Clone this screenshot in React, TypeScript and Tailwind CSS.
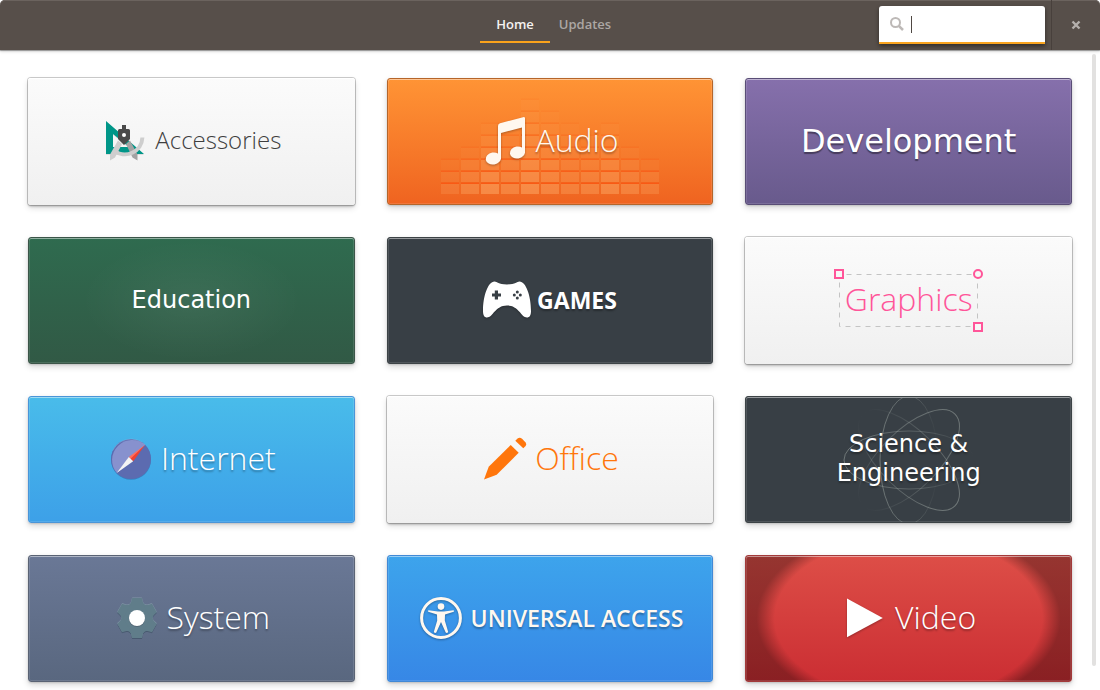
import type { ReactNode } from "react";

const LIGHT =
  "bg-linear-to-b from-[#fbfbfb] to-[#f0f0f0] shadow-[0_0_0_1px_rgba(0,0,0,0.2),0_2px_2px_rgba(0,0,0,0.16),0_3px_6px_rgba(0,0,0,0.14),inset_0_1px_0_#ffffff]";
const SOLID =
  "border shadow-[0_1px_2px_rgba(0,0,0,0.14),0_3px_6px_rgba(0,0,0,0.16),inset_0_1px_0_rgba(255,255,255,0.4),inset_0_0_0_1px_rgba(255,255,255,0.12)]";
const THIN = "pb-0.5 font-['Open_Sans','Noto_Sans',sans-serif] font-light";
const HEAVY = "font-['Open_Sans','Noto_Sans',sans-serif] text-[23px]";
const DEJAVU = "font-['DejaVu_Sans',sans-serif]";
const TEXT_SHADOW = "[text-shadow:0_2px_2px_rgba(0,0,0,0.3)]";
const ICON_SHADOW = "drop-shadow-[0_1px_1px_rgba(0,0,0,0.3)]";

function Tile({ className, backdrop, children }: { className: string; backdrop?: ReactNode; children: ReactNode }) {
  return (
    <button
      type="button"
      className={`relative flex h-[127px] items-center justify-center overflow-hidden rounded-[3px] bg-origin-border pb-px ${className}`}
    >
      {backdrop}
      <span className="relative flex items-center justify-center gap-1.5">{children}</span>
    </button>
  );
}

function Icon({ className = "", children }: { className?: string; children: ReactNode }) {
  return (
    <svg viewBox="0 0 48 48" className={`size-12 shrink-0 overflow-visible ${className}`} aria-hidden="true">
      {children}
    </svg>
  );
}

function AccessoriesIcon() {
  return (
    <Icon>
      <path d="M5 4 43 37H5Z M12 17V30H28Z" transform="translate(0 .8)" fill="#000" opacity=".12" fillRule="evenodd" />
      <path d="M5 4 43 37H5Z M12 17V30H28Z" fill="#009688" fillRule="evenodd" />
      <path d="M25 27 29 23.5 36.5 37.5V43.5L31.5 40.5Z" fill="#a3a3a3" />
      <path d="M41.4 20.5A17.5 17.5 0 0 1 13 33.5" fill="none" stroke="#cecece" strokeWidth="4" />
      <path d="M17 23.5 21 27 14 40.5 9 43.5V37.5Z" fill="#cecece" />
      <path d="M21 8H25V12H27.5Q29 12 29 13.5V22L23 28 17 22V13.5Q17 12 18.5 12H21Z" fill="#4a4a4a" />
      <circle cx="23" cy="18" r="2" fill="#fff" />
    </Icon>
  );
}

function AudioIcon() {
  return (
    <Icon className={ICON_SHADOW}>
      <path d="M17 9Q17 7 19 6.3L42 .2Q44 -.4 44 1.5V36H41V10.5L20 16V42H17Z" fill="#fff8ef" />
      <ellipse cx="12.3" cy="41.5" rx="7.7" ry="6" transform="rotate(-10 12.3 41.5)" fill="#fff8ef" />
      <ellipse cx="36.4" cy="35.5" rx="7.6" ry="6" transform="rotate(-10 36.4 35.5)" fill="#fff8ef" />
    </Icon>
  );
}

const LEVELS = [3, 4, 6, 6, 8, 7, 6, 5, 6, 4, 3];
const STRENGTH = [0.16, 0.26, 0.36, 0.28, 0.36, 0.3, 0.24, 0.26, 0.32, 0.26, 0.2];

function Equalizer() {
  return (
    <span className="absolute inset-x-0 bottom-2.5 flex justify-center">
      <svg viewBox="0 0 218 96" className="h-24 w-[218px]" aria-hidden="true">
        {LEVELS.map((level, col) =>
          Array.from({ length: level }, (_, row) => {
            const fade = 1 - row / level;
            return (
              <g key={`${col}-${row}`}>
                <rect x={col * 20} y={86 - row * 12} width="18" height="10" fill="#ffb877" opacity={STRENGTH[col] * fade * 1.2} />
                <rect x={col * 20} y={84.5 - row * 12} width="18" height="1.5" fill="#ff4a0a" opacity={0.55 * fade} />
              </g>
            );
          }),
        )}
      </svg>
    </span>
  );
}

function GamesIcon() {
  return (
    <Icon className={ICON_SHADOW}>
      <path
        d="M11.5 5.5C14.5 5.5 15 8.5 24 8.5S33.5 5.5 36.5 5.5C43 5.5 48 20 48 35 48 39.5 46.5 41.5 44 41.5 38 41.5 36 29.5 24 29.5S10 41.5 4 41.5C1.5 41.5 0 39.5 0 35 0 20 5 5.5 11.5 5.5Z"
        fill="#fff"
      />
      <path d="M11.8 14.5H15V17.4H18V20.6H15V23.5H11.8V20.6H9V17.4H11.8Z" fill="#383f45" />
      <g fill="#383f45">
        <circle cx="34.3" cy="16" r="1.5" />
        <circle cx="34.3" cy="22" r="1.5" />
        <circle cx="31.3" cy="19" r="1.5" />
        <circle cx="37.3" cy="19" r="1.5" />
      </g>
    </Icon>
  );
}

function SelectionFrame() {
  return (
    <svg viewBox="0 0 139 53" className="absolute inset-0 h-full w-full overflow-visible" aria-hidden="true">
      <rect x=".5" y=".5" width="138" height="52" fill="none" stroke="#c4c4c4" strokeDasharray="5 5" strokeDashoffset="3" />
      <g fill="#f7f7f7" stroke="#ff5599" strokeWidth="2">
        <rect x="-4" y="-4" width="8" height="8" />
        <circle cx="139" cy="0" r="4" />
        <rect x="135" y="49" width="8" height="8" />
      </g>
    </svg>
  );
}

function InternetIcon() {
  return (
    <Icon>
      <circle cx="24" cy="24.8" r="20" fill="#1d3f7a" opacity=".35" />
      <circle cx="24" cy="24" r="20" fill="#5c6bb0" />
      <path d="M9.9 38.1A20 20 0 0 1 38.1 9.9Z" fill="#8791ce" />
      <path d="M6 15.5A20 20 0 0 1 38.1 9.9" fill="none" stroke="#fff" strokeOpacity=".2" strokeWidth=".8" />
      <path d="M38 10 21.8 22 24 24.2Z" fill="#ff6f5e" />
      <path d="M38 10 26.2 26.2 23.5 23.8Z" fill="#f0412f" />
      <path d="M9.7 38 21.8 22 26.2 26.2Z" fill="#f3f3f3" />
    </Icon>
  );
}

function OfficeIcon() {
  return (
    <Icon>
      <path d="M3 44.5 7.7 31.7 29.7 10 37.7 17.7 15.7 39.7Z" fill="#ff760c" />
      <path d="M34.3 5.7 36.3 3.7Q38.8 1.8 41.3 4L44.6 7.6Q46 9.3 44.6 11L42.3 13.3Z" fill="#ff760c" />
    </Icon>
  );
}

function Atom() {
  return (
    <span className="absolute inset-0 flex items-center justify-center">
      <svg viewBox="-70 -70 140 140" className="size-[140px] shrink-0" aria-hidden="true">
        <defs>
          <linearGradient id="orbit" x1="0" y1="0" x2="1" y2="0">
            <stop offset="0" stopColor="#9aa39f" stopOpacity=".55" />
            <stop offset=".6" stopColor="#9aa39f" stopOpacity=".3" />
            <stop offset="1" stopColor="#9aa39f" stopOpacity="0" />
          </linearGradient>
        </defs>
        <g fill="none" stroke="url(#orbit)" strokeWidth="1">
          <ellipse rx="65" ry="29" />
          <ellipse rx="29" ry="64" />
          <ellipse rx="65" ry="29" transform="rotate(135)" />
          <ellipse rx="65" ry="29" transform="rotate(225)" />
        </g>
      </svg>
    </span>
  );
}

function Gear({ fill }: { fill: string }) {
  return (
    <g fill={fill}>
      <circle cx="24" cy="24" r="15" />
      {[0, 60, 120, 180, 240, 300].map((angle) => (
        <path key={angle} d="M19 4.5Q19 4 19.5 4H28.5Q29 4 29 4.5L30 8.5Q31 11 34 12H14Q17 11 18 8.5Z" transform={`rotate(${angle} 24 24)`} />
      ))}
    </g>
  );
}

function SystemIcon() {
  return (
    <Icon>
      <g transform="translate(0 1)" opacity=".5">
        <Gear fill="#33475a" />
      </g>
      <g transform="translate(0 -.6)" opacity=".7">
        <Gear fill="#90a5b4" />
      </g>
      <Gear fill="#607d8a" />
      <circle cx="24" cy="24.8" r="8" fill="#333344" opacity=".4" />
      <circle cx="24" cy="24" r="8" fill="#fff" />
    </Icon>
  );
}

function AccessIcon() {
  return (
    <Icon className={ICON_SHADOW}>
      <circle cx="24" cy="24" r="19.4" fill="none" stroke="#fff8ef" strokeWidth="3" />
      <circle cx="24" cy="12.6" r="3.3" fill="#fff8ef" />
      <path
        d="M11.5 16.2 21 17.5H27L36.5 16.2Q37.5 16.8 36.7 17.8L28 20.5 27.8 26.5 31.2 38Q30 39.5 28.7 38.5L24 28 19.3 38.5Q18 39.5 16.8 38L20.2 26.5 20 20.5 11.3 17.8Q10.5 16.8 11.5 16.2Z"
        fill="#fff8ef"
      />
    </Icon>
  );
}

function VideoIcon() {
  return (
    <Icon className={ICON_SHADOW}>
      <path d="M6 4.5 41.8 24 6 43.3Z" fill="#fff" />
    </Icon>
  );
}

function Header() {
  return (
    <header className="relative grid h-[50px] grid-cols-[1fr_auto_1fr] rounded-t-[5px] bg-[#574f4a] font-['Open_Sans','Noto_Sans',sans-serif] shadow-[inset_0_1px_0_#6b635e,0_1px_1px_rgba(0,0,0,0.35),0_2px_3px_rgba(0,0,0,0.12)]">
      <nav className="col-start-2 flex h-[43px] text-[13px] font-semibold">
        <a href="#home" aria-current="page" className="flex w-[70px] items-center justify-center border-b-2 border-[#fba31b] pt-2 text-[#f4f2f1]">
          Home
        </a>
        <a href="#updates" className="flex w-[70px] items-center justify-center border-b-2 border-transparent pt-2 text-[#aca7a4]">
          Updates
        </a>
      </nav>
      <div className="flex items-center justify-end">
        <div className="mr-1.5 flex h-[38px] w-[166px] items-center rounded-t-[3px] border-b-2 border-[#f9a41f] bg-white pl-2.5 shadow-[0_2px_4px_rgba(0,0,0,0.45)]">
          <svg viewBox="0 0 16 16" className="size-4 shrink-0" fill="none" stroke="#bdb9b7" strokeWidth="2" aria-hidden="true">
            <circle cx="6.5" cy="6.5" r="4.5" />
            <path d="M9.8 9.8 14 14" strokeWidth="2.5" />
          </svg>
          <span className="ml-1.5 h-[17px] w-px shrink-0 bg-[#4f4843]" />
          <input type="search" aria-label="Search" className="h-full min-w-0 flex-1 bg-transparent text-[13px] text-[#3c3633] caret-transparent outline-none" />
        </div>
        <button type="button" aria-label="Close" className="flex h-full w-[49px] items-center justify-center border-l border-[#48403c]">
          <svg viewBox="0 0 10 10" className="size-2.5" fill="none" stroke="#b5b0ad" strokeWidth="2.4" aria-hidden="true">
            <path d="M1.5 1.5 8.5 8.5M8.5 1.5 1.5 8.5" />
          </svg>
        </button>
      </div>
    </header>
  );
}

export default function App() {
  return (
    <div className="flex min-h-screen flex-col bg-white">
      <Header />
      <main className="relative grid flex-1 grid-cols-3 content-start gap-8 px-7 pt-7 pb-2">
        <Tile className={LIGHT}>
          <AccessoriesIcon />
          <span className={`${THIN} text-2xl text-[#3f3f3f]`}>Accessories</span>
        </Tile>

        <Tile className={`${SOLID} border-[#b5652a] bg-linear-to-b from-[#ff9435] to-[#ef6320]`} backdrop={<Equalizer />}>
          <AudioIcon />
          <span className={`${THIN} ${TEXT_SHADOW} text-[32px] leading-10 text-[#fff8ef]`}>Audio</span>
        </Tile>

        <Tile className={`${SOLID} border-[#594d76] bg-linear-to-b from-[#8670ac] to-[#685a8c]`}>
          <span className={`${DEJAVU} text-[32px] leading-10 text-white [text-shadow:0_2px_1px_rgba(0,0,0,0.4)]`}>Development</span>
        </Tile>

        <Tile
          className={`${SOLID} border-[#3b5548] bg-[radial-gradient(ellipse_110px_60px_at_center,rgba(255,255,255,0.06),transparent),linear-gradient(to_bottom,#2f6b4f,#315945)]`}
        >
          <span className={`${DEJAVU} text-2xl text-white`}>Education</span>
        </Tile>

        <Tile className={`${SOLID} border-[#3c4346] bg-[#383f45]`}>
          <GamesIcon />
          <span className={`${HEAVY} ${TEXT_SHADOW} font-bold text-white`}>GAMES</span>
        </Tile>

        <Tile className={LIGHT}>
          <span className="relative flex h-[53px] w-[139px] items-center justify-center">
            <SelectionFrame />
            <span className={`${THIN} text-[32px] leading-10 text-[#ff5599]`}>Graphics</span>
          </span>
        </Tile>

        <Tile className={`${SOLID} border-[#4a95d8] bg-linear-to-b from-[#49bcea] to-[#3da0e8]`}>
          <InternetIcon />
          <span className={`${THIN} ${TEXT_SHADOW} text-[32px] leading-10 text-white`}>Internet</span>
        </Tile>

        <Tile className={LIGHT}>
          <OfficeIcon />
          <span className={`${THIN} text-[32px] leading-10 text-[#ff760c]`}>Office</span>
        </Tile>

        <Tile className={`${SOLID} border-[#3c4346] bg-[#383f45]`} backdrop={<Atom />}>
          <span className={`${DEJAVU} ${TEXT_SHADOW} text-2xl leading-[29px] text-white`}>
            Science &amp;
            <br />
            Engineering
          </span>
        </Tile>

        <Tile className={`${SOLID} border-[#5a6374] bg-linear-to-b from-[#6a7896] to-[#59677f]`}>
          <SystemIcon />
          <span className={`${THIN} ${TEXT_SHADOW} text-[32px] leading-10 text-white`}>System</span>
        </Tile>

        <Tile className={`${SOLID} border-[#4189d6] bg-linear-to-b from-[#3da4ec] to-[#3787e6]`}>
          <AccessIcon />
          <span className={`${HEAVY} ${TEXT_SHADOW} font-semibold whitespace-nowrap text-[#fff8ef]`}>UNIVERSAL ACCESS</span>
        </Tile>

        <Tile
          className={`${SOLID} border-[#a33a3a] bg-[radial-gradient(ellipse_152px_92px_at_center,transparent_88%,rgba(0,0,0,0.32)_100%),linear-gradient(to_bottom,#dd4e47,#cb2e33)]`}
        >
          <VideoIcon />
          <span className={`${THIN} ${TEXT_SHADOW} text-[32px] leading-10 text-white`}>Video</span>
        </Tile>

        <div className="absolute top-1 right-1 bottom-6 w-1 rounded-full bg-[#e2e1e0]" />
      </main>
    </div>
  );
}
